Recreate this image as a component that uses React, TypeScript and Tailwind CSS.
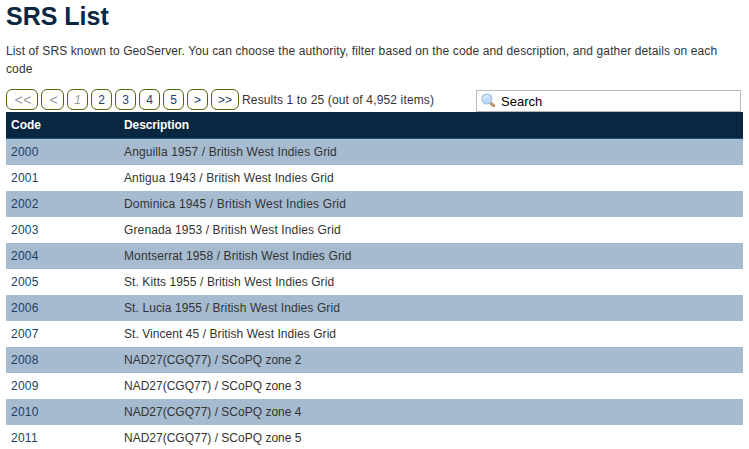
const rows: { code: string; text: string; spacing: string }[] = [
  { code: "2000", text: "Anguilla 1957 / British West Indies Grid", spacing: "tracking-[0.125px]" },
  { code: "2001", text: "Antigua 1943 / British West Indies Grid", spacing: "tracking-[0.1px]" },
  { code: "2002", text: "Dominica 1945 / British West Indies Grid", spacing: "tracking-[0.17px]" },
  { code: "2003", text: "Grenada 1953 / British West Indies Grid", spacing: "tracking-[0.125px]" },
  { code: "2004", text: "Montserrat 1958 / British West Indies Grid", spacing: "tracking-[0.12px]" },
  { code: "2005", text: "St. Kitts 1955 / British West Indies Grid", spacing: "tracking-[0.09px]" },
  { code: "2006", text: "St. Lucia 1955 / British West Indies Grid", spacing: "tracking-[0.1px]" },
  { code: "2007", text: "St. Vincent 45 / British West Indies Grid", spacing: "tracking-[0.06px]" },
  { code: "2008", text: "NAD27(CGQ77) / SCoPQ zone 2", spacing: "tracking-normal" },
  { code: "2009", text: "NAD27(CGQ77) / SCoPQ zone 3", spacing: "tracking-normal" },
  { code: "2010", text: "NAD27(CGQ77) / SCoPQ zone 4", spacing: "tracking-normal" },
  { code: "2011", text: "NAD27(CGQ77) / SCoPQ zone 5", spacing: "tracking-normal" },
];

const pages = [
  { label: "<<", style: "w-8 pl-[2px] text-[14px] tracking-[0.3px]", off: true },
  { label: "<", style: "w-[23px] pl-[2px] text-[14px]", off: true },
  { label: "1", style: "w-[21px]", off: true },
  { label: "2", style: "w-[21px]", off: false },
  { label: "3", style: "w-[21px]", off: false },
  { label: "4", style: "w-[21px]", off: false },
  { label: "5", style: "w-[21px]", off: false },
  { label: ">", style: "w-[21px]", off: false },
  { label: ">>", style: "w-7", off: false },
];

function SearchIcon() {
  return (
    <svg width="16" height="16" viewBox="0 0 16 16" fill="none">
      <path d="M10 10.3 12.6 12.6" stroke="#b98350" strokeWidth="3" strokeLinecap="round" />
      <path d="m9.9 9.7 2.9 2.6" stroke="#e3b483" strokeWidth="1" />
      <circle cx="6" cy="6" r="4.9" fill="#bfdcf6" stroke="#a3bde2" strokeWidth="1.2" />
      <path d="M3 6a3.2 3.2 0 0 1 5-2.6" stroke="#e8f4ff" strokeWidth="1.4" />
    </svg>
  );
}

export default function App() {
  return (
    <main className="h-[449px] w-[749px] overflow-hidden bg-white px-1.5 font-['Liberation_Sans',Arial,sans-serif] text-[12px] text-[#333333]">
      <h1 className="h-[42px] pt-px text-[25px] leading-[30px] font-bold text-[#0a2742]">SRS List</h1>
      <p className="h-[47px] leading-[18px] whitespace-nowrap tracking-[0.115px]">
        List of SRS known to GeoServer. You can choose the authority, filter based on the code and description, and gather details on each
        <br />
        code
      </p>
      <div className="flex h-[23px] items-start">
        <nav className="flex gap-[3px]">
          {pages.map((p) => (
            <button
              key={p.label}
              className={`flex h-[21px] items-center justify-center rounded-[6px] border border-[#4d6b08] pt-px leading-[18px] ${p.style} ${p.off ? "text-[#999999] italic" : "text-[#1d3f66]"}`}
            >
              {p.label}
            </button>
          ))}
        </nav>
        <span className="ml-[3px] leading-[23px] tracking-[0.15px] whitespace-nowrap">Results 1 to 25 (out of 4,952 items)</span>
        <label className="mt-px mr-[2px] ml-auto flex h-[22px] w-[265px] items-center border border-[#b8b8b8] pl-1 text-[13px] text-black">
          <SearchIcon />
          <span className="ml-1 pt-px">Search</span>
        </label>
      </div>
      <section>
        <div className="flex h-[27px] border-b border-[#1b5286] bg-[#0a2742] pl-[5px] leading-[26px] font-bold text-white">
          <span className="w-[113px]">Code</span>
          <span className="tracking-[-0.1px]">Description</span>
        </div>
        {rows.map((r) => (
          <div key={r.code} className="flex h-[26px] pl-[5px] leading-[26px] odd:bg-white even:bg-[#a6bbd0]">
            <span className="w-[113px] tracking-[0.25px] text-[#1d3f66]">{r.code}</span>
            <span className={r.spacing}>{r.text}</span>
          </div>
        ))}
      </section>
    </main>
  );
}
